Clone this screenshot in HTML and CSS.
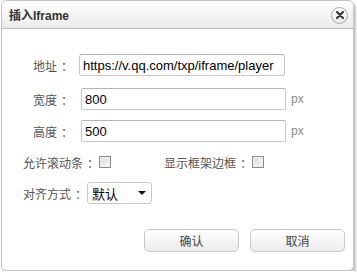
FILE: index.html
```html
<!DOCTYPE html>
<html lang="zh">
<head>
  <meta charset="UTF-8">
  <title>插入Iframe</title>
  <link rel="stylesheet" href="styles.css">
</head>
<body>
<div class="dialog">
  <div class="dialog-title">
    <span>插入Iframe</span>
    <span class="close">
      <svg width="8" height="8" viewBox="0 0 8 8"><path d="M1 1L7 7M7 1L1 7" stroke="#333" stroke-width="2" stroke-linecap="round"/></svg>
    </span>
  </div>

  <div class="dialog-body">
    <div class="row row-url">
      <label class="label">地址<span class="colon">：</span></label>
      <input class="input input-url" type="text" value="https://v.qq.com/txp/iframe/player">
    </div>
    <div class="row row-size">
      <label class="label">宽度<span class="colon">：</span></label>
      <input class="input" type="text" value="800">
      <span class="unit">px</span>
    </div>
    <div class="row row-size row-height">
      <label class="label">高度<span class="colon">：</span></label>
      <input class="input" type="text" value="500">
      <span class="unit">px</span>
    </div>
    <div class="row row-check">
      <span class="label">允许滚动条<span class="colon">：</span></span>
      <span class="check"></span>
      <span class="label label-border">显示框架边框<span class="colon">：</span></span>
      <span class="check"></span>
    </div>
    <div class="row row-align">
      <span class="label">对齐方式<span class="colon">：</span></span>
      <div class="select">
        <span>默认</span>
        <span class="arrow"></span>
      </div>
    </div>
  </div>

  <div class="dialog-foot">
    <button class="btn">确认</button>
    <button class="btn">取消</button>
  </div>
</div>
</body>
</html>
```

FILE: styles.css
```css
body {
  margin: 0;
  background-color: #fff;
  font-family: "Liberation Sans", "Noto Sans CJK SC", sans-serif;
  color: #555;
}

.dialog {
  box-sizing: border-box;
  width: 353px;
  height: 271px;
  margin-left: 1px;
  border: 1px solid #c4c4c4;
  border-radius: 5px;
  box-shadow: 2px 3px 2px #c8c8c8;
  background-color: #fff;
}

.dialog-title {
  display: flex;
  align-items: center;
  justify-content: space-between;
  height: 27px;
  padding: 0 5px 0 7px;
  border-bottom: 1px solid #bdbdbd;
  border-radius: 5px 5px 0 0;
  background: linear-gradient(#ffffff, #ebebeb);
  font-size: 12px;
  font-weight: bold;
  color: #333;
}

.close {
  display: flex;
  align-items: center;
  justify-content: center;
  box-sizing: border-box;
  width: 17px;
  height: 17px;
  margin-top: 1px;
  border: 1px solid #a8a8a8;
  border-radius: 50%;
  background: linear-gradient(#ffffff, #e6e6e6);
}

.dialog-body {
  padding-top: 25px;
}

.row {
  display: flex;
  align-items: center;
  height: 22px;
  padding-left: 31px;
  font-size: 12px;
}

.label {
  flex-shrink: 0;
  white-space: nowrap;
}

/* 冒号居中，和原界面一致 */
.colon {
  padding-left: 4px;
  margin-right: -4px;
}

.row-size {
  margin-top: 12px;
}

.row-height {
  margin-top: 10px;
}

.row-url .label {
  width: 46px;
}

.row-size .label {
  width: 48px;
}

.input {
  box-sizing: border-box;
  width: 205px;
  height: 22px;
  margin: 0;
  padding: 1px 3px 0;
  border: 1px solid #c8c8c8;
  border-top-color: #b4b4b4;
  border-radius: 2px;
  font-family: "Liberation Sans", sans-serif;
  font-size: 13px;
  color: #000;
}

.input-url {
  width: 206px;
  border-radius: 3px;
}

.unit {
  margin-left: 5px;
  color: #888;
}

.row-check {
  margin-top: 9px;
  padding-left: 21px;
}

.check {
  box-sizing: border-box;
  flex-shrink: 0;
  width: 12px;
  height: 12px;
  margin-left: 4px;
  border: 1px solid #8c8c8c;
  background: linear-gradient(135deg, #dcdcdc, #f6f6f6);
  box-shadow: inset 0 0 0 1px #f0f0f0;
}

.label-border {
  margin-left: 53px;
}

.row-align {
  margin-top: 9px;
  padding-left: 21px;
}

.select {
  box-sizing: border-box;
  display: flex;
  align-items: center;
  justify-content: space-between;
  width: 65px;
  height: 22px;
  margin-left: 4px;
  padding: 0 5px 0 4px;
  border: 1px solid #c8c8c8;
  border-radius: 3px;
  font-size: 13px;
  color: #000;
}

.arrow {
  width: 0;
  height: 0;
  border-left: 4px solid transparent;
  border-right: 4px solid transparent;
  border-top: 4px solid #111;
}

.dialog-foot {
  display: flex;
  justify-content: flex-end;
  gap: 11px;
  margin-top: 25px;
  padding-right: 8px;
}

.btn {
  width: 95px;
  height: 23px;
  padding: 0;
  border: 1px solid #c8c8c8;
  border-radius: 5px;
  background: linear-gradient(#ffffff, #ececec);
  font-family: "Liberation Sans", "Noto Sans CJK SC", sans-serif;
  font-size: 12px;
  color: #444;
}
```
